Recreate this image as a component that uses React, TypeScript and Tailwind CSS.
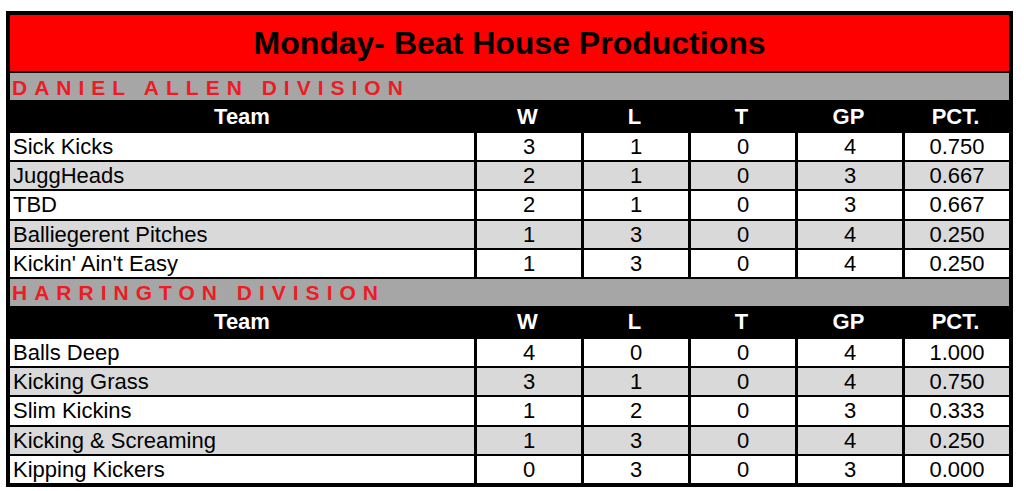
type Row = { team: string; w: number; l: number; t: number; gp: number; pct: string };

const divisions: { name: string; rows: Row[] }[] = [
  {
    name: "DANIEL ALLEN DIVISION",
    rows: [
      { team: "Sick Kicks", w: 3, l: 1, t: 0, gp: 4, pct: "0.750" },
      { team: "JuggHeads", w: 2, l: 1, t: 0, gp: 3, pct: "0.667" },
      { team: "TBD", w: 2, l: 1, t: 0, gp: 3, pct: "0.667" },
      { team: "Balliegerent Pitches", w: 1, l: 3, t: 0, gp: 4, pct: "0.250" },
      { team: "Kickin' Ain't Easy", w: 1, l: 3, t: 0, gp: 4, pct: "0.250" },
    ],
  },
  {
    name: "HARRINGTON DIVISION",
    rows: [
      { team: "Balls Deep", w: 4, l: 0, t: 0, gp: 4, pct: "1.000" },
      { team: "Kicking Grass", w: 3, l: 1, t: 0, gp: 4, pct: "0.750" },
      { team: "Slim Kickins", w: 1, l: 2, t: 0, gp: 3, pct: "0.333" },
      { team: "Kicking & Screaming", w: 1, l: 3, t: 0, gp: 4, pct: "0.250" },
      { team: "Kipping Kickers", w: 0, l: 3, t: 0, gp: 3, pct: "0.000" },
    ],
  },
];

const cols = "grid grid-cols-[464px_repeat(5,1fr)]";

function Division({ name, rows, last }: { name: string; rows: Row[]; last: boolean }) {
  return (
    <section>
      <div className="flex h-[27px] items-center bg-[#a6a6a6] pl-[2px] pt-[1px] text-[21px] font-bold leading-none tracking-[7px] text-[#ec1c24]">
        {name}
      </div>
      <div className={`${cols} h-[31px] items-center bg-black pt-[2px] text-[22px] font-bold leading-none text-white`}>
        {["Team", "W", "L", "T", "GP", "PCT."].map((h) => (
          <div key={h} className="text-center">
            {h}
          </div>
        ))}
      </div>
      <div className={last ? "" : "border-b-2 border-black"}>
        {rows.map((r, i) => (
          <div
            key={r.team}
            className={`${cols} h-[29.2px] border-t-2 border-black text-[22px] leading-none text-black ${
              i % 2 === 1 ? "bg-[#d9d9d9]" : "bg-white"
            }`}
          >
            <div className="flex items-center pl-[3px] pt-[1px]">{r.team}</div>
            {[r.w, r.l, r.t, r.gp, r.pct].map((v, j) => (
              <div key={j} className="flex items-center justify-center border-l-[3px] border-black pt-[1px]">
                {v}
              </div>
            ))}
          </div>
        ))}
      </div>
    </section>
  );
}

export default function App() {
  return (
    <div className="h-[491px] w-[1024px] bg-white pl-[6px] pt-[11px] font-['Liberation_Sans',Arial,sans-serif]">
      <div className="w-[1007px] border-4 border-black">
        <div className="flex h-[58px] items-center justify-center border-b-2 border-black bg-[#ff0000] text-[32px] font-bold leading-none text-black">
          Monday- Beat House Productions
        </div>
        {divisions.map((d, i) => (
          <Division key={d.name} name={d.name} rows={d.rows} last={i === divisions.length - 1} />
        ))}
      </div>
    </div>
  );
}
